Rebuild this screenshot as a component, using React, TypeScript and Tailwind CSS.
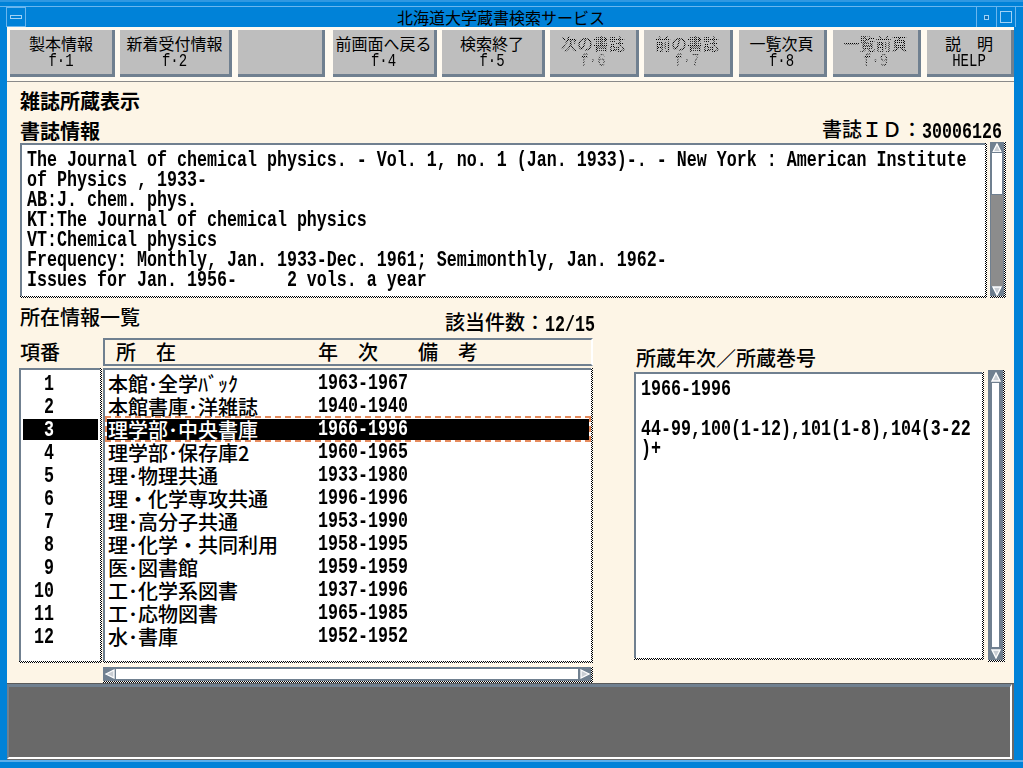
import React from "react";

const CJK = "font-['Noto_Sans_CJK_JP',sans-serif]";
const MONO = "font-['Liberation_Mono','Noto_Sans_CJK_JP',monospace]";
const CHECK =
  "bg-[image:repeating-conic-gradient(#000_0_25%,#fff_0_50%)] bg-[length:2px_2px]";
const STIPPLE =
  "bg-[image:repeating-conic-gradient(#000_0_25%,transparent_0_50%)] bg-[length:2px_2px] bg-clip-text text-transparent";

function M({ children, className = "" }: { children: React.ReactNode; className?: string }) {
  return (
    <span className={`inline-block whitespace-pre ${MONO} text-[16.67px] scale-y-[1.33] ${className}`}>
      {children}
    </span>
  );
}

function Tri({ d }: { d: "u" | "d" | "l" | "r" }) {
  const pts =
    d === "u" ? "5,1 9,9 1,9" : d === "d" ? "1,1 9,1 5,9" : d === "l" ? "1,5 9,1 9,9" : "1,1 9,5 1,9";
  return (
    <svg width="10" height="10" viewBox="0 0 10 10" className="block">
      <polygon points={pts} fill="#c9ced4" stroke="#ffffff" strokeWidth="1.3" />
    </svg>
  );
}

const BTNS = [
  { a: "製本情報", b: "f·1", c: "ml-[3px] w-[105px]", off: false },
  { a: "新着受付情報", b: "f·2", c: "ml-[5px] w-[112px]", off: false },
  { a: "", b: "", c: "ml-[6px] w-[87px]", off: false },
  { a: "前画面へ戻る", b: "f·4", c: "ml-[8px] w-[104px]", off: false },
  { a: "検索終了", b: "f·5", c: "ml-[5px] w-[103px]", off: false },
  { a: "次の書誌", b: "f·6", c: "ml-[5px] w-[89px]", off: true },
  { a: "前の書誌", b: "f·7", c: "ml-[5px] w-[89px]", off: true },
  { a: "一覧次頁", b: "f·8", c: "ml-[6px] w-[88px]", off: false },
  { a: "一覧前頁", b: "f·9", c: "ml-[6px] w-[88px]", off: true },
  { a: "説　明", b: "HELP", c: "ml-[6px] w-[87px]", off: false },
];

const ROWS = [
  ["1", "本館･全学ﾊﾞｯｸ", "1963-1967"],
  ["2", "本館書庫･洋雑誌", "1940-1940"],
  ["3", "理学部･中央書庫", "1966-1996"],
  ["4", "理学部･保存庫2", "1960-1965"],
  ["5", "理･物理共通", "1933-1980"],
  ["6", "理・化学専攻共通", "1996-1996"],
  ["7", "理･高分子共通", "1953-1990"],
  ["8", "理･化学・共同利用", "1958-1995"],
  ["9", "医･図書館", "1959-1959"],
  ["10", "工･化学系図書", "1937-1996"],
  ["11", "工･応物図書", "1965-1985"],
  ["12", "水･書庫", "1952-1952"],
];

const BIB = [
  "The Journal of chemical physics. - Vol. 1, no. 1 (Jan. 1933)-. - New York : American Institute",
  "of Physics , 1933-",
  "AB:J. chem. phys.",
  "KT:The Journal of chemical physics",
  "VT:Chemical physics",
  "Frequency: Monthly, Jan. 1933-Dec. 1961; Semimonthly, Jan. 1962-",
  "Issues for Jan. 1956-     2 vols. a year",
];

function Button({ a, b, c, off }: { a: string; b: string; c: string; off: boolean }) {
  return (
    <div
      className={`${c} h-[47px] shrink-0 bg-[#bebebe] border-r-[3px] border-b-[3px] border-[#708090] flex flex-col items-center justify-center text-black`}
    >
      <span className={`block h-[17px] text-[16px] leading-[17px] ${off ? STIPPLE : ""}`}>{a}</span>
      <span
        className={`block h-[15px] mt-[2px] whitespace-pre ${MONO} text-[14px] leading-[15px] scale-y-[1.3] ${off ? STIPPLE : ""}`}
      >
        {b}
      </span>
    </div>
  );
}

export default function App() {
  return (
    <div className={`w-[1023px] h-[768px] bg-[#0082d8] flex flex-col overflow-hidden ${CJK}`}>
      {/* top frame */}
      <div className="h-[7px] shrink-0 border-t-[2px] border-t-[#2f98e2] border-b border-b-[#6ab6ee]" />
      {/* title bar */}
      <div className="h-[20px] shrink-0 flex">
        <div className="w-[6px]" />
        <div className="w-[20px] h-[20px] border border-[#6ab6ee] flex items-center justify-center">
          <div className="w-[12px] h-[4px] border border-[#9fd2f6]" />
        </div>
        <div className="flex-1 text-center text-[16px] leading-[20px] text-black">北海道大学蔵書検索サービス</div>
        <div className="w-[20px] h-[20px] border-l border-[#6ab6ee] flex items-center justify-center">
          <div className="w-[5px] h-[5px] border border-[#9fd2f6] bg-[#0a6fb8]" />
        </div>
        <div className="w-[19px] h-[20px] border-l border-[#6ab6ee] flex items-center justify-center">
          <div className="w-[12px] h-[12px] border border-[#9fd2f6]" />
        </div>
        <div className="w-[8px] border-l border-[#6ab6ee]" />
      </div>

      {/* window body */}
      <div className="ml-[7px] w-[1007px] h-[733px] shrink-0 flex flex-col bg-[#fdf5e6] text-black">
        {/* button bar */}
        <div className="h-[55px] shrink-0 flex items-start pt-[3px] bg-[#fffaf0] border-b border-[#8a8a8a]">
          {BTNS.map((b, i) => (
            <Button key={i} {...b} />
          ))}
        </div>

        <div className="flex-1 flex flex-col">
          <div className="ml-[13px] mt-[7px] text-[20px] leading-[23px] font-bold">雑誌所蔵表示</div>

          <div className="mt-[7px] h-[23px] flex justify-between pl-[13px] pr-[12px] text-[20px] leading-[23px]">
            <span className="font-bold">書誌情報</span>
            <span className="font-medium -mt-[2px]">
              書誌ＩＤ：<M className="font-bold">30006126</M>
            </span>
          </div>

          {/* bibliographic text */}
          <div className="mt-[1px] flex pl-[13px] gap-[3px]">
            <div className={`${CHECK} w-[967px] h-[155px] pr-[2px] pb-[2px] shrink-0`}>
              <div className="h-full bg-white border-t-2 border-l-2 border-[#708090] pt-[6px] pl-[5px]">
                {BIB.map((l, i) => (
                  <div key={i} className={`h-[20px] leading-[20px] whitespace-pre ${MONO} text-[16.67px] font-bold scale-y-[1.33]`}>
                    {l}
                  </div>
                ))}
              </div>
            </div>
            <div className={`${CHECK} w-[16px] h-[156px] -mt-[1px] pr-[2px] pb-[2px] shrink-0`}>
              <div className="h-full flex flex-col bg-[#708090] p-[1px]">
                <div className="h-[9px] flex items-center justify-center">
                  <Tri d="u" />
                </div>
                <div className="h-[43px] bg-white border border-[#708090]" />
                <div className="flex-1 bg-[#8c8c8c]" />
                <div className="h-[9px] flex items-center justify-center">
                  <Tri d="d" />
                </div>
              </div>
            </div>
          </div>

          {/* lower area */}
          <div className="flex pl-[12px]">
            {/* left column */}
            <div className="w-[576px] shrink-0 flex flex-col">
              <div className="mt-[7px] flex justify-between items-start text-[20px] leading-[23px] font-medium">
                <span className="pl-[1px]">所在情報一覧</span>
                <span className="mt-[5px]">
                  該当件数：<M className="font-bold">12/15</M>
                </span>
              </div>
              <div className="mt-[1px] h-[28px] flex text-[20px] font-medium">
                <div className="w-[84px] pl-[1px] leading-[28px]">項番</div>
                <div className="w-[490px] h-[28px] border-t-2 border-l-2 border-b-2 border-r-2 border-[#708090] border-r-white flex items-center whitespace-pre">
                  <span className="pl-[11px] w-[213px]">所　在</span>
                  <span>年　次　　備　考</span>
                </div>
              </div>
              <div className="mt-[2px] flex">
                <div className={`${CHECK} w-[83px] h-[295px] pr-[2px] pb-[2px] shrink-0`}>
                  <div className="h-full bg-white border-t-2 border-l-2 border-[#708090] pt-[2px]">
                    {ROWS.map((r, i) => (
                      <div key={i} className="h-[23px] px-[2px] py-[1px]">
                        <div className={`h-full flex items-center ${i === 2 ? "bg-black text-white" : ""}`}>
                          <div className="w-[31px] text-right">
                            <M className="font-bold">{r[0]}</M>
                          </div>
                        </div>
                      </div>
                    ))}
                  </div>
                </div>
                <div className={`${CHECK} ml-[1px] w-[490px] h-[295px] pr-[2px] pb-[2px] shrink-0`}>
                  <div className="h-full bg-white border-t-2 border-l-2 border-[#708090] pt-[2px]">
                    {ROWS.map((r, i) => (
                      <div key={i} className="relative h-[23px] px-[2px] py-[1px]">
                        <div
                          className={`h-full flex items-center text-[20px] font-medium ${
                            i === 2 ? "bg-black text-white" : ""
                          }`}
                        >
                          <div className="w-[211px] pl-[1px] leading-[21px]">{r[1]}</div>
                          <M className="font-bold">{r[2]}</M>
                        </div>
                        {i === 2 && (
                          <div className="absolute left-0 right-0 -top-[2px] -bottom-[1px] border-2 border-dashed border-[#e58a5c]" />
                        )}
                      </div>
                    ))}
                  </div>
                </div>
              </div>
              {/* horizontal scrollbar */}
              <div className={`${CHECK} ml-[84px] mt-[4px] w-[490px] h-[16px] pr-[2px] pb-[2px]`}>
                <div className="h-full flex bg-[#708090] p-[1px]">
                  <div className="w-[11px] flex items-center justify-center">
                    <Tri d="l" />
                  </div>
                  <div className="flex-1 bg-white border border-[#708090]" />
                  <div className="w-[11px] flex items-center justify-center">
                    <Tri d="r" />
                  </div>
                </div>
              </div>
            </div>

            {/* right column */}
            <div className="ml-[39px] w-[371px] shrink-0 flex flex-col">
              <div className="mt-[48px] pl-[2px] text-[20px] leading-[23px] font-medium">所蔵年次／所蔵巻号</div>
              <div className="mt-[3px] flex">
                <div className={`${CHECK} w-[350px] h-[288px] pr-[2px] pb-[2px] shrink-0`}>
                  <div className="h-full bg-white border-t-2 border-l-2 border-[#708090] pt-[6px] pl-[5px]">
                    {["1966-1996", " ", "44-99,100(1-12),101(1-8),104(3-22", ")+"].map((l, i) => (
                      <div key={i} className={`h-[20px] leading-[20px] whitespace-pre ${MONO} text-[16.67px] font-bold scale-y-[1.33]`}>
                        {l}
                      </div>
                    ))}
                  </div>
                </div>
                <div className={`${CHECK} ml-[4px] -mt-[2px] w-[17px] h-[292px] pr-[2px] pb-[2px] shrink-0`}>
                  <div className="h-full flex flex-col bg-[#708090] p-[1px]">
                    <div className="h-[11px] flex items-center justify-center">
                      <Tri d="u" />
                    </div>
                    <div className="flex-1 mx-[2px] bg-white border border-[#708090]" />
                    <div className="h-[11px] flex items-center justify-center">
                      <Tri d="d" />
                    </div>
                  </div>
                </div>
              </div>
            </div>
          </div>
        </div>

        {/* status area */}
        <div className="h-[78px] shrink-0 bg-[#696969] border-t border-t-[#5a5a5a] pr-[2px] pb-[2px]">
          <div className="h-full bg-[#696969] border-t-[3px] border-l-[2px] border-r-2 border-b-2 border-[#708090] border-r-white border-b-white" />
        </div>
      </div>

      {/* bottom frame */}
      <div className="flex-1 border-t-2 border-[#5aaeea]" />
    </div>
  );
}
